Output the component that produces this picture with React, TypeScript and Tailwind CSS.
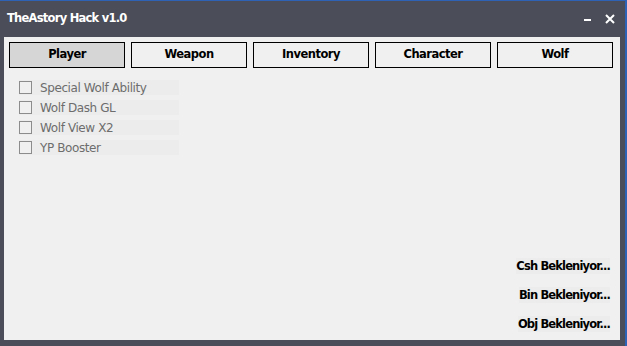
import React from "react";

const tabs = ["Player", "Weapon", "Inventory", "Character", "Wolf"];
const checks = ["Special Wolf Ability", "Wolf Dash GL", "Wolf View X2", "YP Booster"];
const statuses = ["Csh Bekleniyor...", "Bin Bekleniyor...", "Obj Bekleniyor..."];

export default function App() {
  return (
    <div
      className="w-[627px] h-[346px] bg-[#4b4d58] border-t border-t-[#2d62b4] border-r-2 border-r-[#2d62b4] flex flex-col overflow-hidden"
      style={{ fontFamily: '"DejaVu Sans", Tahoma, sans-serif' }}
    >
      <div className="h-[36px] flex items-center justify-between pl-[7px] pr-[10px]">
        <span className="text-white font-bold text-[11.5px] tracking-[-0.75px]">TheAstory Hack v1.0</span>
        <div className="flex items-center gap-[12px]">
          <svg width="10" height="10" viewBox="0 0 10 10">
            <rect x="1" y="5" width="7" height="2" fill="#ffffff" />
          </svg>
          <svg width="10" height="10" viewBox="0 0 10 10">
            <path d="M1 1 L9 9 M9 1 L1 9" stroke="#ffffff" strokeWidth="2" />
          </svg>
        </div>
      </div>
      <div className="ml-[4px] mr-[5px] mb-[6px] flex-1 bg-[#f0f0f0] flex flex-col pl-[5px] pr-[5px] pt-[5px] pb-[8px]">
        <div className="flex gap-[6px]">
          {tabs.map((t, i) => (
            <div
              key={t}
              className={`w-[116px] h-[26px] border border-black flex items-center justify-center text-[11.5px] font-bold text-black tracking-[-0.5px] ${
                i === 0 ? "bg-[#d6d6d6]" : "bg-[#f0f0f0]"
              }`}
            >
              {t}
            </div>
          ))}
        </div>
        <div className="flex flex-col gap-[5px] mt-[12px] pl-[10px]">
          {checks.map((c) => (
            <div key={c} className="flex items-center h-[15px] w-[160px] bg-[#ececec]">
              <div className="w-[13px] h-[13px] border border-[#8c8c8c] bg-[#f0f0f0]" />
              <span className="ml-[8px] text-[12px] text-[#6d6d6d] tracking-[-0.4px]">{c}</span>
            </div>
          ))}
        </div>
        <div className="mt-auto flex flex-col items-end gap-[13px] pr-[5px]">
          {statuses.map((s) => (
            <span key={s} className="text-[11.5px] font-bold text-black bg-[#ececec] leading-[16px] tracking-[-0.85px]">
              {s}
            </span>
          ))}
        </div>
      </div>
    </div>
  );
}
